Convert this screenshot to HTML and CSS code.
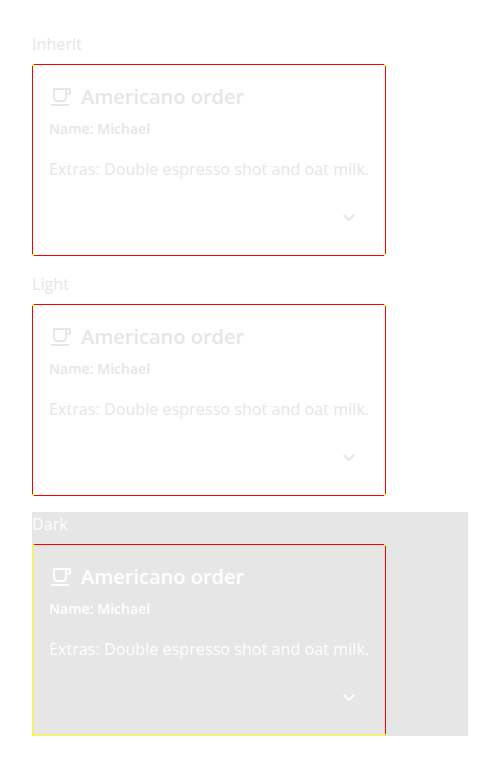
FILE: index.html
```
<!DOCTYPE html>
<html lang="en">
<head>
<meta charset="utf-8">
<title>Card themes</title>
<link rel="stylesheet" href="styles.css">
</head>
<body>
<section class="theme">
  <p class="label">Inherit</p>
  <article class="card">
    <header class="heading"><svg class="cup" viewBox="0 0 24 24"><path d="M20 3H4v10c0 2.210 1.790 4 4 4h6c2.210 0 4-1.790 4-4v-3h2c1.110 0 2-.89 2-2V5c0-1.110-.89-2-2-2zm-4 10c0 1.100-.9 2-2 2H8c-1.100 0-2-.9-2-2V5h10v8zm4-5h-2V5h2v3zM2 19h18v2H2z"/></svg><h2>Americano order</h2></header>
    <h3>Name: Michael</h3>
    <p class="extras">Extras: Double espresso shot and oat milk.</p>
    <div class="actions"><svg class="chevron" viewBox="0 0 24 24"><path d="M7.410 8.090 12 12.670l4.590-4.580L18 9.500l-6 6-6-6z"/></svg></div>
  </article>
</section>
<section class="theme">
  <p class="label">Light</p>
  <article class="card">
    <header class="heading"><svg class="cup" viewBox="0 0 24 24"><path d="M20 3H4v10c0 2.210 1.790 4 4 4h6c2.210 0 4-1.790 4-4v-3h2c1.110 0 2-.89 2-2V5c0-1.110-.89-2-2-2zm-4 10c0 1.100-.9 2-2 2H8c-1.100 0-2-.9-2-2V5h10v8zm4-5h-2V5h2v3zM2 19h18v2H2z"/></svg><h2>Americano order</h2></header>
    <h3>Name: Michael</h3>
    <p class="extras">Extras: Double espresso shot and oat milk.</p>
    <div class="actions"><svg class="chevron" viewBox="0 0 24 24"><path d="M7.410 8.090 12 12.670l4.590-4.580L18 9.500l-6 6-6-6z"/></svg></div>
  </article>
</section>
<section class="theme dark">
  <p class="label">Dark</p>
  <article class="card">
    <header class="heading"><svg class="cup" viewBox="0 0 24 24"><path d="M20 3H4v10c0 2.210 1.790 4 4 4h6c2.210 0 4-1.790 4-4v-3h2c1.110 0 2-.89 2-2V5c0-1.110-.89-2-2-2zm-4 10c0 1.100-.9 2-2 2H8c-1.100 0-2-.9-2-2V5h10v8zm4-5h-2V5h2v3zM2 19h18v2H2z"/></svg><h2>Americano order</h2></header>
    <h3>Name: Michael</h3>
    <p class="extras">Extras: Double espresso shot and oat milk.</p>
    <div class="actions"><svg class="chevron" viewBox="0 0 24 24"><path d="M7.410 8.090 12 12.670l4.590-4.580L18 9.500l-6 6-6-6z"/></svg></div>
  </article>
</section>
</body>
</html>
```
FILE: styles.css
```
* { box-sizing: border-box; }
body {
  margin: 0;
  padding: 32px;
  display: flex;
  flex-direction: column;
  gap: 16px;
  background: #fff;
  color: #e6e6e6;
  font: 400 16px/24px "Open Sans", sans-serif;
  letter-spacing: 0.08px;
}
h2, h3, p { margin: 0; }
.theme {
  --left: red;
  --right: red;
  --bottom: red;
  --corner: yellow;
  height: 224px;
}
.label { height: 32px; }
.card {
  width: 354px;
  height: 192px;
  padding: 17px;
  white-space: nowrap;
  background-image:
    linear-gradient(red, red),
    linear-gradient(var(--bottom), var(--bottom)),
    linear-gradient(var(--left), var(--left)),
    linear-gradient(var(--right), var(--right)),
    linear-gradient(135deg, transparent 25%, var(--corner) 25% 75%, transparent 75%),
    linear-gradient(225deg, transparent 25%, var(--corner) 25% 75%, transparent 75%),
    linear-gradient(45deg, transparent 25%, var(--corner) 25% 75%, transparent 75%),
    linear-gradient(315deg, transparent 25%, var(--corner) 25% 75%, transparent 75%);
  background-size:
    calc(100% - 4px) 1px, calc(100% - 4px) 1px,
    1px calc(100% - 4px), 1px calc(100% - 4px),
    2px 2px, 2px 2px, 2px 2px, 2px 2px;
  background-position:
    2px 0, 2px 100%, 0 2px, 100% 2px,
    0 0, 100% 0, 0 100%, 100% 100%;
  background-repeat: no-repeat;
}
.heading { display: flex; gap: 8px; height: 32px; }
h2 { font-size: 20px; line-height: 32px; font-weight: 600; letter-spacing: 0; }
h3 { font-size: 14px; line-height: 24px; font-weight: 600; margin-top: 4px; letter-spacing: 0.04px; }
.extras { margin-top: 16px; }
svg { fill: currentColor; }
.cup { width: 24px; height: 24px; margin-top: 4px; }
.actions { display: flex; justify-content: flex-end; margin: 25px 8px 0 0; }
.chevron { width: 24px; height: 24px; }
.dark {
  --left: yellow;
  --bottom: yellow;
  color: #fff;
  background: #e6e6e6;
}
```
